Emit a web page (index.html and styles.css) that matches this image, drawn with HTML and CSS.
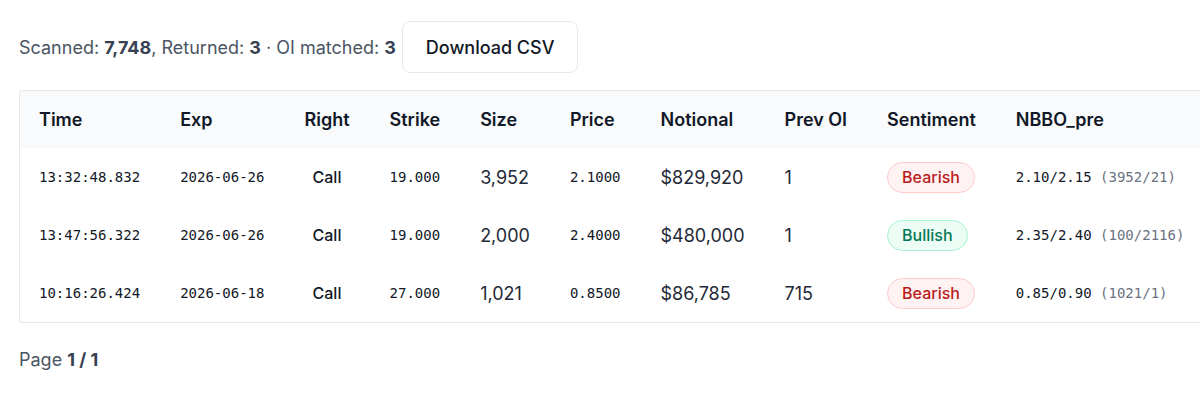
FILE: index.html
```html
<!DOCTYPE html>
<html>
<head>
<meta charset="utf-8">
<link rel="stylesheet" href="styles.css">
</head>
<body>
<div class="page">
  <div class="toolbar">
    <div class="status">Scanned: <b>7,748</b>, Returned: <b>3</b> · OI matched: <b>3</b></div>
    <button class="btn">Download CSV</button>
  </div>
  <div class="table-wrap">
    <table class="grid">
      <thead>
        <tr>
          <th>Time</th><th>Exp</th><th>Right</th><th>Strike</th><th>Size</th><th>Price</th><th>Notional</th><th>Prev OI</th><th>Sentiment</th><th>NBBO_pre</th>
        </tr>
      </thead>
      <tbody>
        <tr>
          <td class="mono">13:32:48.832</td><td class="mono">2026-06-26</td><td class="right">Call</td><td class="mono">19.000</td><td class="num">3,952</td><td class="mono">2.1000</td><td class="num">$829,920</td><td class="num">1</td><td><span class="pill bear">Bearish</span></td><td class="mono">2.10/2.15 <span class="muted">(3952/21)</span></td>
        </tr>
        <tr>
          <td class="mono">13:47:56.322</td><td class="mono">2026-06-26</td><td class="right">Call</td><td class="mono">19.000</td><td class="num">2,000</td><td class="mono">2.4000</td><td class="num">$480,000</td><td class="num">1</td><td><span class="pill bull">Bullish</span></td><td class="mono">2.35/2.40 <span class="muted">(100/2116)</span></td>
        </tr>
        <tr>
          <td class="mono">10:16:26.424</td><td class="mono">2026-06-18</td><td class="right">Call</td><td class="mono">27.000</td><td class="num">1,021</td><td class="mono">0.8500</td><td class="num">$86,785</td><td class="num">715</td><td><span class="pill bear">Bearish</span></td><td class="mono">0.85/0.90 <span class="muted">(1021/1)</span></td>
        </tr>
      </tbody>
    </table>
  </div>
  <div class="pager">Page <b>1 / 1</b></div>
</div>
</body>
</html>
```

FILE: styles.css
```css
html, body {
  margin: 0;
  padding: 0;
  background: #ffffff;
  overflow: hidden;
}
body {
  font-family: Inter, "Noto Sans", "Liberation Sans", sans-serif;
  color: #1f2937;
}
.page {
  padding: 21px 0 0 19px;
}
.toolbar {
  display: flex;
  align-items: center;
  gap: 6px;
  height: 52px;
}
.status {
  font-size: 18px;
  color: #4b5563;
  white-space: nowrap;
}
.status b {
  color: #374151;
  font-weight: 700;
}
.btn {
  height: 52px;
  padding: 0 23px;
  border: 1px solid #e5e7eb;
  border-radius: 8px;
  background: #ffffff;
  font-family: inherit;
  font-size: 18px;
  font-weight: 500;
  color: #111827;
}
.table-wrap {
  margin-top: 17px;
  border: 1px solid #e5e7eb;
  border-radius: 2px;
  width: max-content;
}
.grid {
  border-collapse: collapse;
  white-space: nowrap;
}
.grid th {
  height: 57px;
  padding: 0 21px 0 19px;
  background: #f8fafc;
  text-align: left;
  font-size: 18px;
  font-weight: 600;
  color: #111827;
}
.grid td {
  height: 58px;
  padding: 0 21px 0 19px;
  text-align: left;
  vertical-align: middle;
}
.grid th:last-child,
.grid td:last-child {
  padding-right: 40px;
}
.mono {
  font-family: "DejaVu Sans Mono", monospace;
  font-size: 14px;
  color: #111827;
}
.muted {
  color: #6b7280;
}
.num {
  font-size: 18px;
  color: #1f2937;
}
.grid td.right {
  text-align: center;
  font-size: 16px;
  font-weight: 500;
  color: #111827;
}
.pill {
  display: inline-block;
  padding: 4px 14px;
  border-radius: 999px;
  border: 1px solid;
  font-size: 16px;
  font-weight: 500;
  line-height: 21px;
}
.bear {
  background: #fef2f2;
  border-color: #fecaca;
  color: #b91c1c;
}
.bull {
  background: #ecfdf5;
  border-color: #a7f3d0;
  color: #047857;
}
.pager {
  margin-top: 26px;
  font-size: 18px;
  color: #4b5563;
}
.pager b {
  color: #374151;
  font-weight: 700;
}
```
